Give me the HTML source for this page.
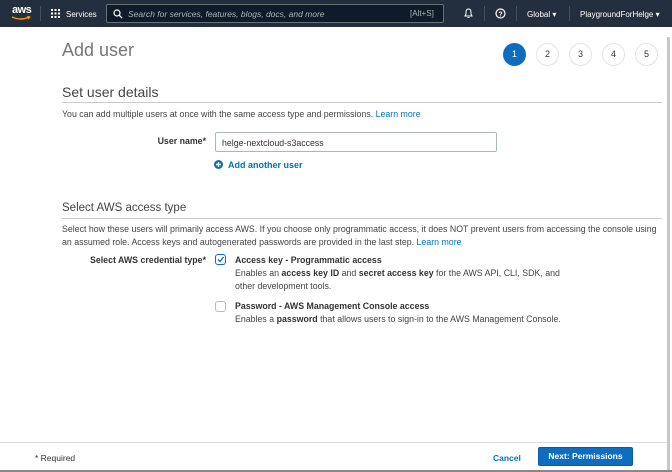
<!DOCTYPE html>
<html><head><meta charset="utf-8"><style>
*{margin:0;padding:0;box-sizing:border-box}
body{width:672px;height:472px;overflow:hidden;background:#fff;font-family:"Liberation Sans",Arial,sans-serif;position:relative;color:#16191f}
.a{position:absolute;white-space:nowrap}
.nav{position:absolute;left:0;top:0;width:672px;height:27px;background:#232f3e}
.nav .t{color:#fff;font-size:8px;position:absolute}
.step{position:absolute;top:43px;width:23px;height:23px;border-radius:50%;border:1px solid #e4e4e4;font-size:9px;text-align:center;line-height:21px;color:#333;background:#fff}
.h2{font-size:14px;color:#444}
.hr{position:absolute;height:1px;background:#ccc}
.sm{font-size:8.8px;color:#444}
.lnk{color:#0073bb}
b{color:#333}
</style></head><body>
<div class="nav">
 <div class="t" style="left:12px;top:4px;font-size:11px;font-weight:bold;letter-spacing:-0.5px">aws</div>
 <svg class="a" style="left:11px;top:16px" width="20" height="5"><path d="M1 1 Q10 5 18 1" stroke="#f90" stroke-width="1.4" fill="none"/><path d="M16 0 L19 1 L17 3" stroke="#f90" stroke-width="1" fill="none"/></svg>
 <div class="a" style="left:40px;top:6px;width:1px;height:15px;background:#444f5c"></div>
 <svg class="a" style="left:51px;top:9px" width="9" height="9"><g fill="#fff"><rect x="0" y="0" width="2" height="2"/><rect x="3.5" y="0" width="2" height="2"/><rect x="7" y="0" width="2" height="2"/><rect x="0" y="3.5" width="2" height="2"/><rect x="3.5" y="3.5" width="2" height="2"/><rect x="7" y="3.5" width="2" height="2"/><rect x="0" y="7" width="2" height="2"/><rect x="3.5" y="7" width="2" height="2"/><rect x="7" y="7" width="2" height="2"/></g></svg>
 <div class="t" style="left:66px;top:10px">Services</div>
 <div class="a" style="left:106px;top:4px;width:338px;height:19px;border:1px solid #687078;border-radius:2px;background:#0f1b2a"></div>
 <svg class="a" style="left:113px;top:9px" width="10" height="10"><circle cx="4" cy="4" r="3" stroke="#fff" stroke-width="1.2" fill="none"/><path d="M6.3 6.3 L9 9" stroke="#fff" stroke-width="1.3"/></svg>
 <div class="t" style="left:128px;top:9px;color:#aab7b8;font-style:italic;font-size:8.5px">Search for services, features, blogs, docs, and more</div>
 <div class="t" style="left:410px;top:9px;color:#aab7b8">[Alt+S]</div>
 <svg class="a" style="left:463px;top:8px" width="11" height="11"><path d="M5.5 1 C3 1 3 3 3 6 L2 8 L9 8 L8 6 C8 3 8 1 5.5 1Z" stroke="#fff" fill="none"/><path d="M4.5 9.5 L6.5 9.5" stroke="#fff"/></svg>
 <div class="a" style="left:484px;top:6px;width:1px;height:15px;background:#444f5c"></div>
 <svg class="a" style="left:495px;top:8px" width="11" height="11"><circle cx="5.5" cy="5.5" r="4.5" stroke="#fff" stroke-width="1.2" fill="none"/><text x="5.5" y="8.3" font-size="7" fill="#fff" text-anchor="middle" font-family="Liberation Sans" font-weight="bold">?</text></svg>
 <div class="a" style="left:516px;top:6px;width:1px;height:15px;background:#444f5c"></div>
 <div class="t" style="left:527px;top:10px">Global ▾</div>
 <div class="a" style="left:569px;top:6px;width:1px;height:15px;background:#444f5c"></div>
 <div class="t" style="left:580px;top:10px">PlaygroundForHelge ▾</div>
</div>
<div class="a" style="left:62px;top:40px;font-size:18px;color:#777;font-weight:300">Add user</div>
<div class="step" style="left:503px;background:#0f6dbf;border-color:#0f6dbf;color:#fff">1</div>
<div class="step" style="left:536px">2</div>
<div class="step" style="left:569px">3</div>
<div class="step" style="left:602px">4</div>
<div class="step" style="left:635px">5</div>
<div class="a" style="left:667px;top:37px;width:3px;height:435px;background:#c8c8c8"></div>

<div class="a h2" style="left:62px;top:84px">Set user details</div>
<div class="hr" style="left:62px;top:102px;width:600px"></div>
<div class="a sm" style="left:62px;top:109px">You can add multiple users at once with the same access type and permissions. <span class="lnk">Learn more</span></div>
<div class="a" style="right:466px;top:136px;font-size:8.8px;font-weight:bold;color:#333">User name*</div>
<div class="a" style="left:215px;top:132px;width:282px;height:20px;border:1px solid #aab7b8;border-radius:2px;font-size:8.8px;padding:5px 0 0 6px;color:#333">helge-nextcloud-s3access</div>
<svg class="a" style="left:214px;top:160px" width="9" height="9"><circle cx="4.5" cy="4.5" r="4.5" fill="#0f6dbf"/><path d="M4.5 2 V7 M2 4.5 H7" stroke="#fff" stroke-width="1.4"/></svg>
<div class="a lnk" style="left:228px;top:160px;font-size:9px;font-weight:bold">Add another user</div>

<div class="a" style="left:62px;top:202px;font-size:11.5px;color:#444">Select AWS access type</div>
<div class="hr" style="left:62px;top:218px;width:600px"></div>
<div class="a sm" style="left:62px;top:224px">Select how these users will primarily access AWS. If you choose only programmatic access, it does NOT prevent users from accessing the console using</div>
<div class="a sm" style="left:62px;top:237px">an assumed role. Access keys and autogenerated passwords are provided in the last step. <span class="lnk">Learn more</span></div>
<div class="a" style="right:466px;top:255px;font-size:8.8px;font-weight:bold;color:#333">Select AWS credential type*</div>
<div class="a" style="left:215px;top:254px;width:11px;height:11px;border:1px solid #0f6dbf;border-radius:3px"></div>
<svg class="a" style="left:216px;top:255px" width="9" height="9"><path d="M2 4.5 L4 6.5 L7.5 2" stroke="#0f6dbf" stroke-width="1.4" fill="none"/></svg>
<div class="a" style="left:235px;top:255px;font-size:8.8px;font-weight:bold;color:#333">Access key - Programmatic access</div>
<div class="a sm" style="left:235px;top:268px">Enables an <b>access key ID</b> and <b>secret access key</b> for the AWS API, CLI, SDK, and</div>
<div class="a sm" style="left:235px;top:281px">other development tools.</div>
<div class="a" style="left:215px;top:301px;width:11px;height:11px;border:1px solid #bbb;border-radius:3px"></div>
<div class="a" style="left:235px;top:301px;font-size:8.8px;font-weight:bold;color:#333">Password - AWS Management Console access</div>
<div class="a sm" style="left:235px;top:314px">Enables a <b>password</b> that allows users to sign-in to the AWS Management Console.</div>

<div class="hr" style="left:0;top:442px;width:667px;background:#ddd"></div>
<div class="a" style="left:35px;top:453px;font-size:8.5px;color:#333">* Required</div>
<div class="a lnk" style="left:493px;top:453px;font-size:8.5px;font-weight:bold">Cancel</div>
<div class="a" style="left:538px;top:447px;width:95px;height:19px;background:#0f6dbf;border:1px solid #0a5ba3;border-radius:2px;color:#fff;font-size:8.5px;font-weight:bold;text-align:center;line-height:17px">Next: Permissions</div>
<div class="a" style="left:0;top:470px;width:672px;height:2px;background:#888"></div>
</body></html>
